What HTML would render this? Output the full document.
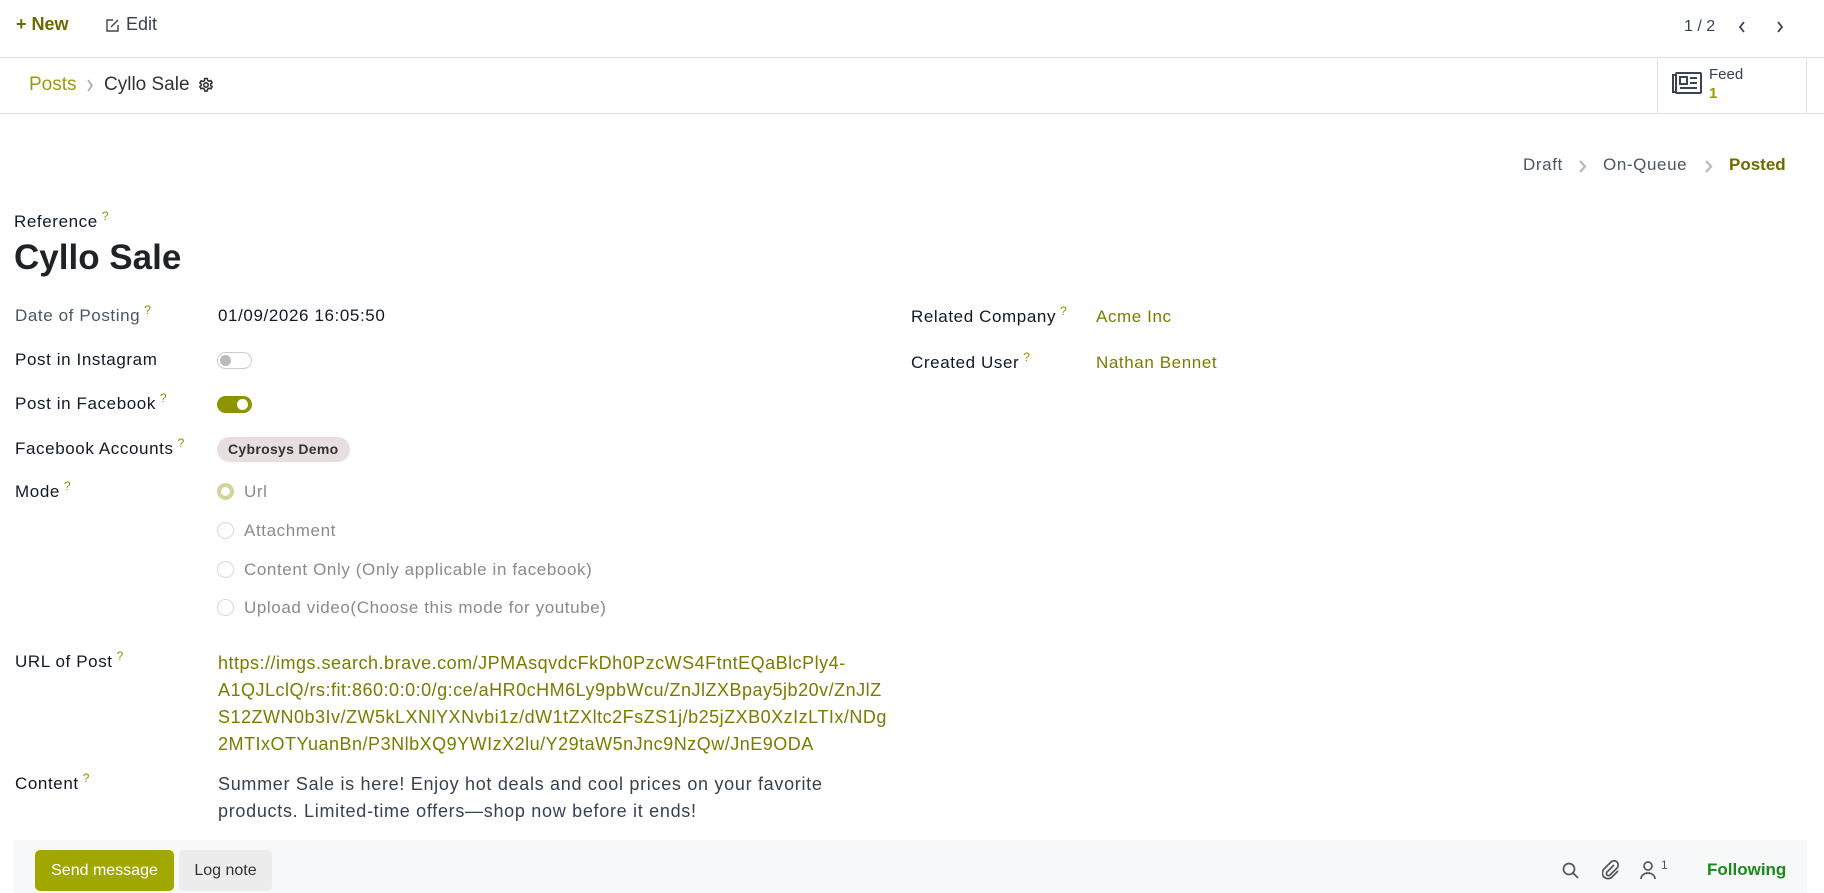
<!DOCTYPE html>
<html><head><meta charset="utf-8"><style>
*{margin:0;padding:0;box-sizing:border-box}
body{width:1824px;height:893px;overflow:hidden;background:#fff;font-family:"Liberation Sans",sans-serif;font-size:17px;color:#111827;position:relative}
.a{position:absolute;white-space:nowrap;line-height:24px;height:24px}
.f{letter-spacing:0.6px}
.q{color:#8f8f00;font-size:12px;vertical-align:top;position:relative;top:-6px;margin-left:4px}
.ol{color:#7b7b00}
.hl{position:absolute;left:0;width:1824px;height:1px;background:#dee2e6}
.gr{color:#8a8a8a}
.rad{position:absolute;width:17px;height:17px;border-radius:50%;border:1px solid #d8d8d8;background:#fff}
</style></head><body>
<!-- top bar -->
<div class="a" style="left:16px;top:12px;font-weight:bold;color:#6b6b00;font-size:18px">+ New</div>
<svg style="position:absolute;left:105px;top:18px" width="15" height="15" viewBox="0 0 15 15" fill="none" stroke="#444" stroke-width="1.4"><path d="M8 2H2v11h11V7"/><path d="M6 9l7-7"/></svg>
<div class="a" style="left:126px;top:12px;color:#374151;font-size:18px">Edit</div>
<div class="a" style="left:1684px;top:15px;color:#374151;font-size:16px">1 / 2</div>
<svg style="position:absolute;left:1738px;top:21px" width="8" height="12" viewBox="0 0 8 12" fill="none" stroke="#374151" stroke-width="1.8"><path d="M6 1L2 6l4 5"/></svg>
<svg style="position:absolute;left:1776px;top:21px" width="8" height="12" viewBox="0 0 8 12" fill="none" stroke="#374151" stroke-width="1.8"><path d="M2 1l4 5-4 5"/></svg>
<div class="hl" style="top:57px"></div>
<!-- breadcrumb -->
<div class="a" style="left:29px;top:73px;font-size:19px;color:#9a9a10">Posts</div>
<svg style="position:absolute;left:86px;top:79px" width="8" height="13" viewBox="0 0 8 13" fill="none" stroke="#aaa" stroke-width="1.6"><path d="M2 1l4 5.5-4 5.5"/></svg>
<div class="a" style="left:104px;top:73px;font-size:19px;color:#333">Cyllo Sale</div>
<svg style="position:absolute;left:198px;top:77px" width="16" height="16" viewBox="0 0 16 16" fill="none" stroke="#333" stroke-width="1.6"><circle cx="8" cy="8" r="2.2"/><path d="M6.8 1.5h2.4l.4 1.8 1.5.9 1.8-.6 1.2 2.1-1.4 1.2v1.6l1.4 1.2-1.2 2.1-1.8-.6-1.5.9-.4 1.8H6.8l-.4-1.8-1.5-.9-1.8.6-1.2-2.1 1.4-1.2V7.2L1.9 6l1.2-2.1 1.8.6 1.5-.9z"/></svg>
<div style="position:absolute;left:1657px;top:57px;width:1px;height:56px;background:#dee2e6"></div>
<div style="position:absolute;left:1806px;top:57px;width:1px;height:56px;background:#dee2e6"></div>
<svg style="position:absolute;left:1671px;top:72px" width="31" height="22" viewBox="0 0 31 22" fill="none" stroke="#3b4350" stroke-width="2"><rect x="5" y="1" width="25" height="20" rx="1"/><path d="M5 3H2v17h3"/><rect x="9" y="5" width="7" height="7"/><path d="M19 6h7M19 11h7M9 16h17"/></svg>
<div class="a" style="left:1709px;top:65px;font-size:15px;color:#374151;line-height:20px">Feed</div>
<div class="a" style="left:1709px;top:84px;font-size:15px;color:#9a9a00;font-weight:bold;line-height:20px">1</div>
<div class="hl" style="top:113px"></div>
<!-- statusbar -->
<div class="a f" style="left:1523px;top:153px;color:#4b5563">Draft</div>
<svg style="position:absolute;left:1578px;top:160px" width="9" height="13" viewBox="0 0 9 13" fill="none" stroke="#bbb" stroke-width="2.4"><path d="M2 1l5 5.5-5 5.5"/></svg>
<div class="a f" style="left:1603px;top:153px;color:#4b5563">On-Queue</div>
<svg style="position:absolute;left:1704px;top:160px" width="9" height="13" viewBox="0 0 9 13" fill="none" stroke="#bbb" stroke-width="2.4"><path d="M2 1l5 5.5-5 5.5"/></svg>
<div class="a" style="left:1729px;top:153px;color:#6b6b00;font-weight:bold">Posted</div>
<!-- title -->
<div class="a f" style="left:14px;top:210px">Reference<span class="q">?</span></div>
<div class="a" style="left:14px;top:238px;font-size:35px;font-weight:bold;line-height:40px;height:40px;color:#1f2328">Cyllo Sale</div>
<!-- left fields -->
<div class="a f" style="left:15px;top:304px;color:#4b5563">Date of Posting<span class="q">?</span></div>
<div class="a f" style="left:218px;top:304px">01/09/2026 16:05:50</div>
<div class="a f" style="left:15px;top:348px">Post in Instagram</div>
<div style="position:absolute;left:217px;top:352px;width:35px;height:17px;border:1px solid #ccc;border-radius:9px;background:#fff"><div style="position:absolute;left:2px;top:2px;width:11px;height:11px;border-radius:50%;background:#bbb"></div></div>
<div class="a f" style="left:15px;top:392px">Post in Facebook<span class="q">?</span></div>
<div style="position:absolute;left:217px;top:396px;width:35px;height:17px;border-radius:9px;background:#8c9400"><div style="position:absolute;left:20px;top:3px;width:11px;height:11px;border-radius:50%;background:#fff"></div></div>
<div class="a f" style="left:15px;top:437px">Facebook Accounts<span class="q">?</span></div>
<div class="a" style="left:217px;top:437px;height:25px;line-height:25px;padding:0 11px;background:#e6dedf;border-radius:13px;font-size:14px;font-weight:bold;color:#333;letter-spacing:0.3px">Cybrosys Demo</div>
<div class="a f" style="left:15px;top:480px">Mode<span class="q">?</span></div>
<div class="rad" style="left:217px;top:483px;border:4px solid #d4d49a"></div>
<div class="a gr f" style="left:244px;top:480px">Url</div>
<div class="rad" style="left:217px;top:522px"></div>
<div class="a gr f" style="left:244px;top:519px">Attachment</div>
<div class="rad" style="left:217px;top:561px"></div>
<div class="a gr f" style="left:244px;top:558px">Content Only (Only applicable in facebook)</div>
<div class="rad" style="left:217px;top:599px"></div>
<div class="a gr f" style="left:244px;top:596px">Upload video(Choose this mode for youtube)</div>
<div class="a f" style="left:15px;top:650px">URL of Post<span class="q">?</span></div>
<div class="ol" style="position:absolute;left:218px;top:650px;line-height:27px;font-size:18px;letter-spacing:0.5px;white-space:nowrap">https://imgs.search.brave.com/JPMAsqvdcFkDh0PzcWS4FtntEQaBlcPly4-<br>A1QJLclQ/rs:fit:860:0:0:0/g:ce/aHR0cHM6Ly9pbWcu/ZnJlZXBpay5jb20v/ZnJlZ<br>S12ZWN0b3Iv/ZW5kLXNlYXNvbi1z/dW1tZXltc2FsZS1j/b25jZXB0XzIzLTIx/NDg<br>2MTIxOTYuanBn/P3NlbXQ9YWIzX2lu/Y29taW5nJnc9NzQw/JnE9ODA</div>
<div class="a f" style="left:15px;top:772px">Content<span class="q">?</span></div>
<div style="position:absolute;left:218px;top:771px;line-height:27px;font-size:18px;letter-spacing:0.7px;color:#374151;white-space:nowrap">Summer Sale is here! Enjoy hot deals and cool prices on your favorite<br>products. Limited-time offers—shop now before it ends!</div>
<!-- right fields -->
<div class="a f" style="left:911px;top:305px">Related Company<span class="q">?</span></div>
<div class="a ol f" style="left:1096px;top:305px">Acme Inc</div>
<div class="a f" style="left:911px;top:351px">Created User<span class="q">?</span></div>
<div class="a ol f" style="left:1096px;top:351px">Nathan Bennet</div>
<!-- chatter -->
<div style="position:absolute;left:14px;top:840px;width:1793px;height:53px;background:#f7f8fa"></div>
<div style="position:absolute;left:35px;top:850px;width:139px;height:41px;background:#a0a800;border-radius:5px;color:#fff;font-size:16px;line-height:41px;text-align:center">Send message</div>
<div style="position:absolute;left:179px;top:850px;width:93px;height:41px;background:#ececec;border-radius:5px;color:#333;font-size:16px;line-height:41px;text-align:center">Log note</div>
<svg style="position:absolute;left:1562px;top:862px" width="17" height="17" viewBox="0 0 17 17" fill="none" stroke="#555" stroke-width="1.7"><circle cx="7" cy="7" r="5.5"/><path d="M11 11l5 5"/></svg>
<svg style="position:absolute;left:1602px;top:860px" width="18" height="20" viewBox="0 0 18 20" fill="none" stroke="#555" stroke-width="1.7"><path d="M12 5l-7 7a2 2 0 0 0 3 3l7-7a4 4 0 0 0-6-6L2 9a5.5 5.5 0 0 0 8 8l6-6"/></svg>
<svg style="position:absolute;left:1640px;top:861px" width="16" height="19" viewBox="0 0 16 19" fill="none" stroke="#555" stroke-width="1.7"><circle cx="8" cy="5" r="4"/><path d="M1 18a7 6 0 0 1 14 0"/></svg>
<div class="a" style="left:1661px;top:853px;font-size:12px;color:#555">1</div>
<div class="a" style="left:1707px;top:858px;color:#1a8a1a;font-weight:bold;font-size:17px">Following</div>
</body></html>
